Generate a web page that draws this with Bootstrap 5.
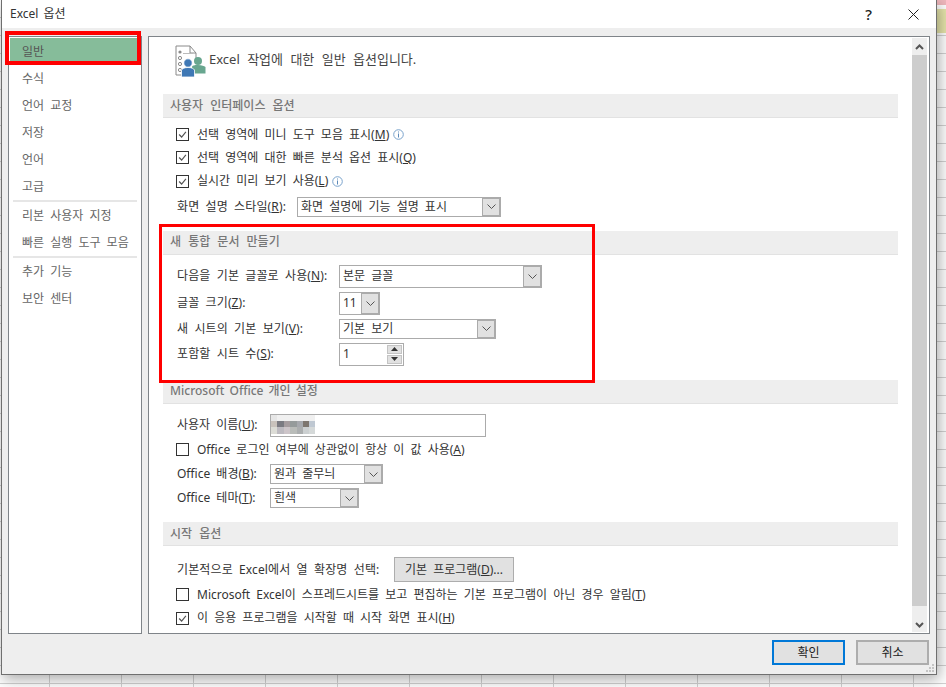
<!DOCTYPE html>
<html lang="ko">
<head>
<meta charset="utf-8">
<title>Excel 옵션</title>
<link rel="stylesheet" href="https://cdn.jsdelivr.net/npm/bootstrap@5.3.0/dist/css/bootstrap.min.css">
<style>
html,body{height:687px;overflow:hidden}
body{font-family:"Noto Sans","Noto Sans CJK KR",sans-serif;font-size:12px;line-height:1;word-spacing:3px;color:#333;position:relative;
 background-color:#fff;
 background-image:repeating-linear-gradient(90deg,transparent 0 49px,#d2d2d2 49px 50px,transparent 50px 72px),repeating-linear-gradient(180deg,transparent 0 17px,#d2d2d2 17px 18px);}
.sheet-pink{position:absolute;left:937px;top:0;width:9px;height:5px;background:#f0b8bd}
.sheet-yellow{position:absolute;left:937px;top:9px;width:9px;height:24px;background:#e6e5ab}
.xl-dialog{position:relative;margin-left:1px;width:936px;height:675px;background:#eee;border:solid #6f6f6f;border-width:0 1px 1px 1px;box-shadow:2px 4px 14px rgba(0,0,0,.35)}
.xl-titlebar{height:28px;background:#fff;padding-left:8px;padding-right:17px;flex:none}
.xl-titletext{font-size:12px;word-spacing:2px;color:#333}
.xl-help{font-size:15px;margin-right:36px;color:#222;font-weight:500}
.xl-main{height:606px;padding:8px 6px 0 6px;gap:6px;flex:none}
.xl-nav{width:134px;background:#fff;border:1px solid #7f8489;border-radius:0;padding:1px;flex:none;color:#666}
.xl-navitem{height:27px;padding-left:12px;display:flex;align-items:center;color:#666;background:transparent;border:0;border-radius:0;flex:none}
.xl-navitem.xl-on{background:#86bc9a;color:#555}
.xl-navsep{height:2px;background:#e6e6e6;margin:0 3px;flex:none}
.xl-panel{flex:1;background:#fff;border:1px solid #7f8489;min-width:0}
.xl-content{flex:1;padding-left:14px;padding-right:14px;min-width:0}
.xl-intro{height:57px;padding-left:12px;gap:2px;padding-bottom:12px;color:#444;font-size:13px;word-spacing:4px}
.xl-intro svg{margin-top:3px}
.xl-head{height:24px;background:#eee;border-bottom:1px solid #e2e2e2;padding-left:7px;color:#777;font-weight:500;display:flex;align-items:center;word-spacing:4px}
.xl-head-latin{word-spacing:2px}
.xl-sec{margin-bottom:14px}
.xl-sec-tall{margin-bottom:14px}
.xl-sec1 .xl-head + *{margin-top:5px}
.xl-check{height:23.33px;padding-left:13px;gap:8px}
.xl-box{width:13px;height:13px;border:1px solid #333;background:#fff;flex:none;display:block}
.xl-row{padding-left:14px;margin-top:4px}
.xl-lab{flex:none;letter-spacing:.12px}
.xl-w1{width:120px}.xl-w2{width:162px}.xl-w3{width:93px;letter-spacing:0}
.xl-sel{border:1px solid #ababab;background:#fff;padding-left:3px;color:#333;justify-content:space-between;align-items:stretch;display:flex}
.xl-seltext{display:flex;align-items:center}
.xl-arrow{width:19px;background:#e1e1e1;display:flex;align-items:center;justify-content:center;border:2px solid #ababab;border-left-width:1px;margin:-1px -1px -1px 0;flex:none}
.xl-arrow svg{overflow:visible}
.xl-h23{height:23px}.xl-h20{height:20px}
.xl-spin{width:65px;height:23px;border:1px solid #ababab;background:#fff;padding-left:3px;justify-content:space-between;align-items:center;display:flex}
.xl-spinbtns{width:15px;margin-right:1px;gap:1px}
.xl-spinbtn{height:9px;background:#e1e1e1;display:flex;align-items:center;justify-content:center;border:1px solid #c4c4c4}
.xl-input{width:216px;height:23px;border:1px solid #ababab;background:#fff;display:flex;align-items:center;overflow:hidden}
.xl-input svg{margin-top:-2px}
.xl-btn{font-size:12px;line-height:1;word-spacing:3px;border-radius:0;padding:0;background:#e1e1e1;border:1px solid #adadad;color:#333}
.xl-prog{width:120px;height:25px;border-width:1px}
.xl-ok{width:73px;height:25px;background:#e1e1e1;border:2px solid #0078d7;color:#222}
.xl-cancel{width:73px;height:25px;border:2px solid #adadad;color:#222}
.xl-scroll{width:15px;margin:1px 2px 1px 0;background:#eee;flex:none}
.xl-scrollbtn{height:17px;display:flex;align-items:center;justify-content:center;flex:none}
.xl-thumb{height:551px;background:#cdcdcd;flex:none}
.xl-foot{height:40px;padding:6px 7px 0 0;gap:11px;justify-content:flex-end;flex:none}
.xl-grip{position:absolute;right:1px;bottom:1px}
.xl-red{position:absolute;border:3px solid #f00;pointer-events:none}
.xl-red1{left:5px;top:31px;width:136px;height:34px;border-width:4px}
.xl-red2{left:159px;top:224px;width:436px;height:159px}
</style>
</head>
<body>
<div class="sheet-pink"></div><div class="sheet-yellow"></div>
<div class="xl-dialog d-flex flex-column">
  <div class="xl-titlebar d-flex align-items-center justify-content-between">
    <span class="xl-titletext">Excel 옵션</span>
    <span class="d-flex align-items-center">
      <span class="xl-help">?</span>
      <svg width="11" height="11" viewBox="0 0 11 11"><path d="M.5.5l10 10M10.5.5l-10 10" stroke="#222" stroke-width="1" fill="none"/></svg>
    </span>
  </div>
  <div class="xl-main d-flex">
    <div class="xl-nav list-group">
      <div class="xl-navitem xl-on">일반</div>
      <div class="xl-navitem">수식</div>
      <div class="xl-navitem">언어 교정</div>
      <div class="xl-navitem">저장</div>
      <div class="xl-navitem">언어</div>
      <div class="xl-navitem">고급</div>
      <div class="xl-navsep"></div>
      <div class="xl-navitem">리본 사용자 지정</div>
      <div class="xl-navitem">빠른 실행 도구 모음</div>
      <div class="xl-navsep"></div>
      <div class="xl-navitem">추가 기능</div>
      <div class="xl-navitem">보안 센터</div>
    </div>
    <div class="xl-panel d-flex">
      <div class="xl-content">
        <div class="xl-intro d-flex align-items-center">
          <svg width="32" height="33" viewBox="0 0 32 33">
            <path d="M8 30H1V1h14l6 7v5M15 1v7h6" fill="none" stroke="#8a8a8a"/>
            <path d="M8 8.5h10" stroke="#bbb"/>
            <circle cx="5" cy="7" r="1.6" fill="#8a8a8a"/>
            <circle cx="5" cy="13" r="1.6" fill="none" stroke="#8a8a8a"/>
            <circle cx="5" cy="19" r="1.6" fill="none" stroke="#8a8a8a"/>
            <circle cx="5" cy="25" r="1.6" fill="none" stroke="#8a8a8a"/>
            <circle cx="23" cy="16" r="4" fill="#68a68f"/>
            <path d="M17 21.5c1-1 2-1.500 6-1.500s6 1 7.500 2v6.500H17z" fill="#68a68f"/>
            <circle cx="13" cy="18" r="4.200" fill="#3f78b5" stroke="#fff" stroke-width=".8"/>
            <path d="M6.500 25c1-1.600 3-2.500 6.500-2.500S18.500 23.400 19.500 25v7H6.500z" fill="#3f78b5" stroke="#fff" stroke-width=".8"/>
          </svg>
          <span>Excel 작업에 대한 일반 옵션입니다.</span>
        </div>

        <div class="xl-sec xl-sec1">
          <div class="xl-head">사용자 인터페이스 옵션</div>
          <div class="xl-check d-flex align-items-center">
            <svg class="xl-box" viewBox="0 0 13 13"><path d="M2.500 6.500l3 3 5-6" fill="none" stroke="#555" stroke-width="1.400"/></svg>
            <span>선택 영역에 미니 도구 모음 표시(<u>M</u>)</span>
            <svg class="info-i" style="margin-left:-4px" width="11" height="11" viewBox="0 0 11 11"><circle cx="5.500" cy="5.500" r="4.800" fill="none" stroke="#7aa3cc"/><path d="M5.500 4.500v4M5.500 2.500v1" stroke="#5b89b8"/></svg>
          </div>
          <div class="xl-check d-flex align-items-center">
            <svg class="xl-box" viewBox="0 0 13 13"><path d="M2.500 6.500l3 3 5-6" fill="none" stroke="#555" stroke-width="1.400"/></svg>
            <span>선택 영역에 대한 빠른 분석 옵션 표시(<u>Q</u>)</span>
          </div>
          <div class="xl-check d-flex align-items-center">
            <svg class="xl-box" viewBox="0 0 13 13"><path d="M2.500 6.500l3 3 5-6" fill="none" stroke="#555" stroke-width="1.400"/></svg>
            <span>실시간 미리 보기 사용(<u>L</u>)</span>
            <svg class="info-i" style="margin-left:-4px" width="11" height="11" viewBox="0 0 11 11"><circle cx="5.500" cy="5.500" r="4.800" fill="none" stroke="#7aa3cc"/><path d="M5.500 4.500v4M5.500 2.500v1" stroke="#5b89b8"/></svg>
          </div>
          <div class="xl-row d-flex align-items-center">
            <span class="xl-lab xl-w1">화면 설명 스타일(<u>R</u>):</span>
            <div class="xl-sel xl-h20" style="width:204px">
              <span class="xl-seltext">화면 설명에 기능 설명 표시</span>
              <span class="xl-arrow"><svg width="9" height="5" viewBox="0 0 9 5"><path d="M.5.500l4 4 4-4" fill="none" stroke="#555"/></svg></span>
            </div>
          </div>
        </div>

        <div class="xl-sec">
          <div class="xl-head">새 통합 문서 만들기</div>
          <div class="xl-row d-flex align-items-center" style="margin-top:10px">
            <span class="xl-lab xl-w2">다음을 기본 글꼴로 사용(<u>N</u>):</span>
            <div class="xl-sel xl-h23" style="width:203px">
              <span class="xl-seltext">본문 글꼴</span>
              <span class="xl-arrow"><svg width="9" height="5" viewBox="0 0 9 5"><path d="M.5.500l4 4 4-4" fill="none" stroke="#555"/></svg></span>
            </div>
          </div>
          <div class="xl-row d-flex align-items-center">
            <span class="xl-lab xl-w2">글꼴 크기(<u>Z</u>):</span>
            <div class="xl-sel xl-h23" style="width:41px">
              <span class="xl-seltext">11</span>
              <span class="xl-arrow"><svg width="9" height="5" viewBox="0 0 9 5"><path d="M.5.500l4 4 4-4" fill="none" stroke="#555"/></svg></span>
            </div>
          </div>
          <div class="xl-row d-flex align-items-center">
            <span class="xl-lab xl-w2">새 시트의 기본 보기(<u>V</u>):</span>
            <div class="xl-sel xl-h20" style="width:157px">
              <span class="xl-seltext">기본 보기</span>
              <span class="xl-arrow"><svg width="9" height="5" viewBox="0 0 9 5"><path d="M.5.500l4 4 4-4" fill="none" stroke="#555"/></svg></span>
            </div>
          </div>
          <div class="xl-row d-flex align-items-center">
            <span class="xl-lab xl-w2">포함할 시트 수(<u>S</u>):</span>
            <div class="xl-spin">
              <span>1</span>
              <span class="xl-spinbtns d-flex flex-column">
                <span class="xl-spinbtn"><svg width="7" height="4" viewBox="0 0 7 4"><path d="M3.500 0L7 4H0z" fill="#333"/></svg></span>
                <span class="xl-spinbtn"><svg width="7" height="4" viewBox="0 0 7 4"><path d="M0 0h7L3.500 4z" fill="#333"/></svg></span>
              </span>
            </div>
          </div>
        </div>

        <div class="xl-sec">
          <div class="xl-head xl-head-latin">Microsoft Office 개인 설정</div>
          <div class="xl-row d-flex align-items-center" style="margin-top:10px">
            <span class="xl-lab xl-w3">사용자 이름(<u>U</u>):</span>
            <div class="xl-input">
              <svg width="44" height="20" viewBox="0 0 44 20" shape-rendering="crispEdges">
                <rect x="0" y="0" width="44" height="7" fill="#f0f0f0"/>
                <rect x="0" y="0" width="6" height="7" fill="#e6e6e6"/>
                <rect x="0" y="7" width="6.500" height="6" fill="#c9c2bc"/><rect x="6" y="7" width="6.500" height="6" fill="#7b7b82"/><rect x="12.500" y="7" width="6.500" height="6" fill="#a59c9f"/><rect x="19" y="7" width="6.500" height="6" fill="#959b9b"/><rect x="25.500" y="7" width="6.500" height="6" fill="#a6a9ae"/><rect x="32" y="7" width="6" height="6" fill="#7d766f"/><rect x="38" y="7" width="6" height="6" fill="#bfc8d2"/>
                <rect x="0" y="13" width="6.500" height="7" fill="#dcdcd6"/><rect x="6" y="13" width="6.500" height="7" fill="#bdbac0"/><rect x="12.500" y="13" width="6.500" height="7" fill="#cdc5c9"/><rect x="19" y="13" width="6.500" height="7" fill="#b9bcb9"/><rect x="25.500" y="13" width="6.500" height="7" fill="#abaeaf"/><rect x="32" y="13" width="6" height="7" fill="#ccd0d1"/><rect x="38" y="13" width="6" height="7" fill="#d5d9d9"/>
              </svg>
            </div>
          </div>
          <div class="xl-check d-flex align-items-center" style="margin-top:1px">
            <span class="xl-box"></span>
            <span>Office 로그인 여부에 상관없이 항상 이 값 사용(<u>A</u>)</span>
          </div>
          <div class="xl-row d-flex align-items-center" style="margin-top:3px">
            <span class="xl-lab xl-w3">Office 배경(<u>B</u>):</span>
            <div class="xl-sel xl-h20" style="width:113px">
              <span class="xl-seltext">원과 줄무늬</span>
              <span class="xl-arrow"><svg width="9" height="5" viewBox="0 0 9 5"><path d="M.5.500l4 4 4-4" fill="none" stroke="#555"/></svg></span>
            </div>
          </div>
          <div class="xl-row d-flex align-items-center">
            <span class="xl-lab xl-w3">Office 테마(<u>T</u>):</span>
            <div class="xl-sel xl-h20" style="width:89px">
              <span class="xl-seltext">흰색</span>
              <span class="xl-arrow"><svg width="9" height="5" viewBox="0 0 9 5"><path d="M.5.500l4 4 4-4" fill="none" stroke="#555"/></svg></span>
            </div>
          </div>
        </div>

        <div class="xl-sec">
          <div class="xl-head">시작 옵션</div>
          <div class="xl-row d-flex align-items-center" style="margin-top:11px">
            <span class="xl-lab" style="width:217px">기본적으로 Excel에서 열 확장명 선택:</span>
            <button type="button" class="btn xl-btn xl-prog">기본 프로그램(<u>D</u>)...</button>
          </div>
          <div class="xl-check d-flex align-items-center" style="margin-top:1px">
            <span class="xl-box"></span>
            <span>Microsoft Excel이 스프레드시트를 보고 편집하는 기본 프로그램이 아닌 경우 알림(<u>T</u>)</span>
          </div>
          <div class="xl-check d-flex align-items-center">
            <svg class="xl-box" viewBox="0 0 13 13"><path d="M2.500 6.500l3 3 5-6" fill="none" stroke="#555" stroke-width="1.400"/></svg>
            <span>이 응용 프로그램을 시작할 때 시작 화면 표시(<u>H</u>)</span>
          </div>
        </div>
      </div>
      <div class="xl-scroll d-flex flex-column">
        <div class="xl-scrollbtn"><svg width="9" height="6" viewBox="0 0 9 6"><path d="M1 5l3.500-3.500L8 5" fill="none" stroke="#555" stroke-width="2"/></svg></div>
        <div class="xl-thumb"></div>
        <div class="flex-grow-1 d-flex align-items-end justify-content-center pb-1"><svg width="9" height="6" viewBox="0 0 9 6"><path d="M1 1l3.500 3.500L8 1" fill="none" stroke="#555" stroke-width="2"/></svg></div>
      </div>
    </div>
  </div>
  <div class="xl-foot d-flex">
    <button type="button" class="btn xl-btn xl-ok">확인</button>
    <button type="button" class="btn xl-btn xl-cancel">취소</button>
  </div>
  <svg class="xl-grip" width="9" height="9" viewBox="0 0 9 9" shape-rendering="crispEdges"><path d="M6 0h2v2H6zM3 3h2v2H3zM6 3h2v2H6zM0 6h2v2H0zM3 6h2v2H3zM6 6h2v2H6z" fill="#c4c4c4"/></svg>
</div>
<div class="xl-red xl-red1"></div>
<div class="xl-red xl-red2"></div>
<script src="https://cdn.jsdelivr.net/npm/bootstrap@5.3.0/dist/js/bootstrap.bundle.min.js"></script>
</body>
</html>
